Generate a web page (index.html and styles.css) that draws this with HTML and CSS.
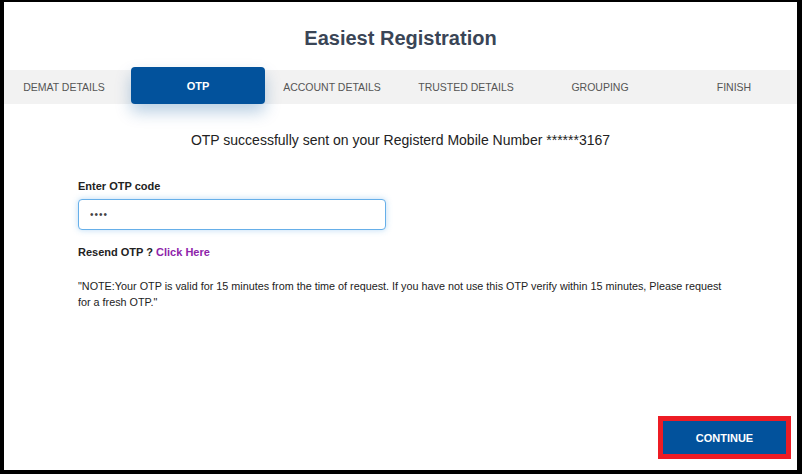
FILE: index.html
```html
<!DOCTYPE html>
<html lang="en">
<head>
  <meta charset="UTF-8" />
  <meta name="viewport" content="width=device-width, initial-scale=1.0"/>
  <title>Easiest Registration</title>
  <link rel="stylesheet" href="styles.css">
</head>
<body>
  <div class="frame">
    <h1 class="title">Easiest Registration</h1>

    <div class="tabs">
      <div class="tab">DEMAT DETAILS</div>
      <div class="tab active">OTP</div>
      <div class="tab">ACCOUNT DETAILS</div>
      <div class="tab">TRUSTED DETAILS</div>
      <div class="tab">GROUPING</div>
      <div class="tab">FINISH</div>
    </div>

    <p class="message">OTP successfully sent on your Registerd Mobile Number ******3167</p>

    <div class="form">
      <label class="label" for="otp">Enter OTP code</label>
      <input type="password" id="otp" class="otp-input" value="1234" />
      <p class="resend">Resend OTP ? <a href="#" class="resend-link">Click Here</a></p>
      <p class="note">"NOTE:Your OTP is valid for 15 minutes from the time of request. If you have not use this OTP verify within 15 minutes, Please request for a fresh OTP."</p>
    </div>

    <div class="footer">
      <div class="highlight">
        <button class="continue-btn">CONTINUE</button>
      </div>
    </div>
  </div>
</body>
</html>
```

FILE: styles.css
```css
:root {
  --primary: #02529c;
  --tab-bg: #f2f2f2;
  --text: #222;
  --muted: #555;
}

body {
  margin: 0;
  background: #000;
  font-family: "Liberation Sans", Arial, sans-serif;
}

.frame {
  margin: 2px 5px 4px 4px;
  height: 468px;
  background: #fff;
  overflow: hidden;
  display: flex;
  flex-direction: column;
}

.title {
  margin: 24px 0 0;
  font-size: 20px;
  line-height: 24px;
  text-align: center;
  color: #3a4556;
}

.tabs {
  display: flex;
  margin: 20px 0 0 -7px;
  height: 34px;
  background: var(--tab-bg);
}

.tab {
  flex: 0 0 134px;
  display: flex;
  align-items: center;
  justify-content: center;
  font-size: 10.5px;
  color: var(--muted);
}

.tab.active {
  margin-top: -3px;
  background: var(--primary);
  color: #fff;
  font-size: 11px;
  font-weight: bold;
  border-radius: 4px;
  box-shadow: 0 8px 16px rgba(2, 82, 156, 0.28);
}

.message {
  margin: 26px 0 0;
  font-size: 14px;
  line-height: 20px;
  text-align: center;
  color: var(--text);
}

.form {
  padding-left: 74px;
  margin-top: 29px;
}

.label {
  display: block;
  font-size: 11px;
  font-weight: bold;
  line-height: 14px;
  color: var(--text);
}

.otp-input {
  display: block;
  box-sizing: border-box;
  width: 308px;
  height: 31px;
  margin-top: 6px;
  padding: 0 11px;
  border: 1px solid #66afe9;
  border-radius: 4px;
  box-shadow: 0 0 6px rgba(102, 175, 233, 0.45);
  font-size: 10px;
  letter-spacing: 1px;
  color: #444;
  outline: none;
}

.resend {
  margin: 15px 0 0;
  font-size: 11px;
  font-weight: bold;
  line-height: 14px;
  color: var(--text);
}

.resend-link {
  color: #8e24aa;
  text-decoration: none;
}

.note {
  margin: 19px 0 0;
  max-width: 648px;
  font-size: 10.8px;
  line-height: 16px;
  color: var(--text);
}

.footer {
  margin-top: auto;
  display: flex;
  justify-content: flex-end;
  padding: 0 6px 11px 0;
}

.highlight {
  border: 5px solid #ed1c24;
  display: flex;
}

.continue-btn {
  width: 123px;
  height: 33px;
  border: none;
  background: var(--primary);
  color: #fff;
  font-family: inherit;
  font-size: 11px;
  font-weight: bold;
  cursor: pointer;
}
```
